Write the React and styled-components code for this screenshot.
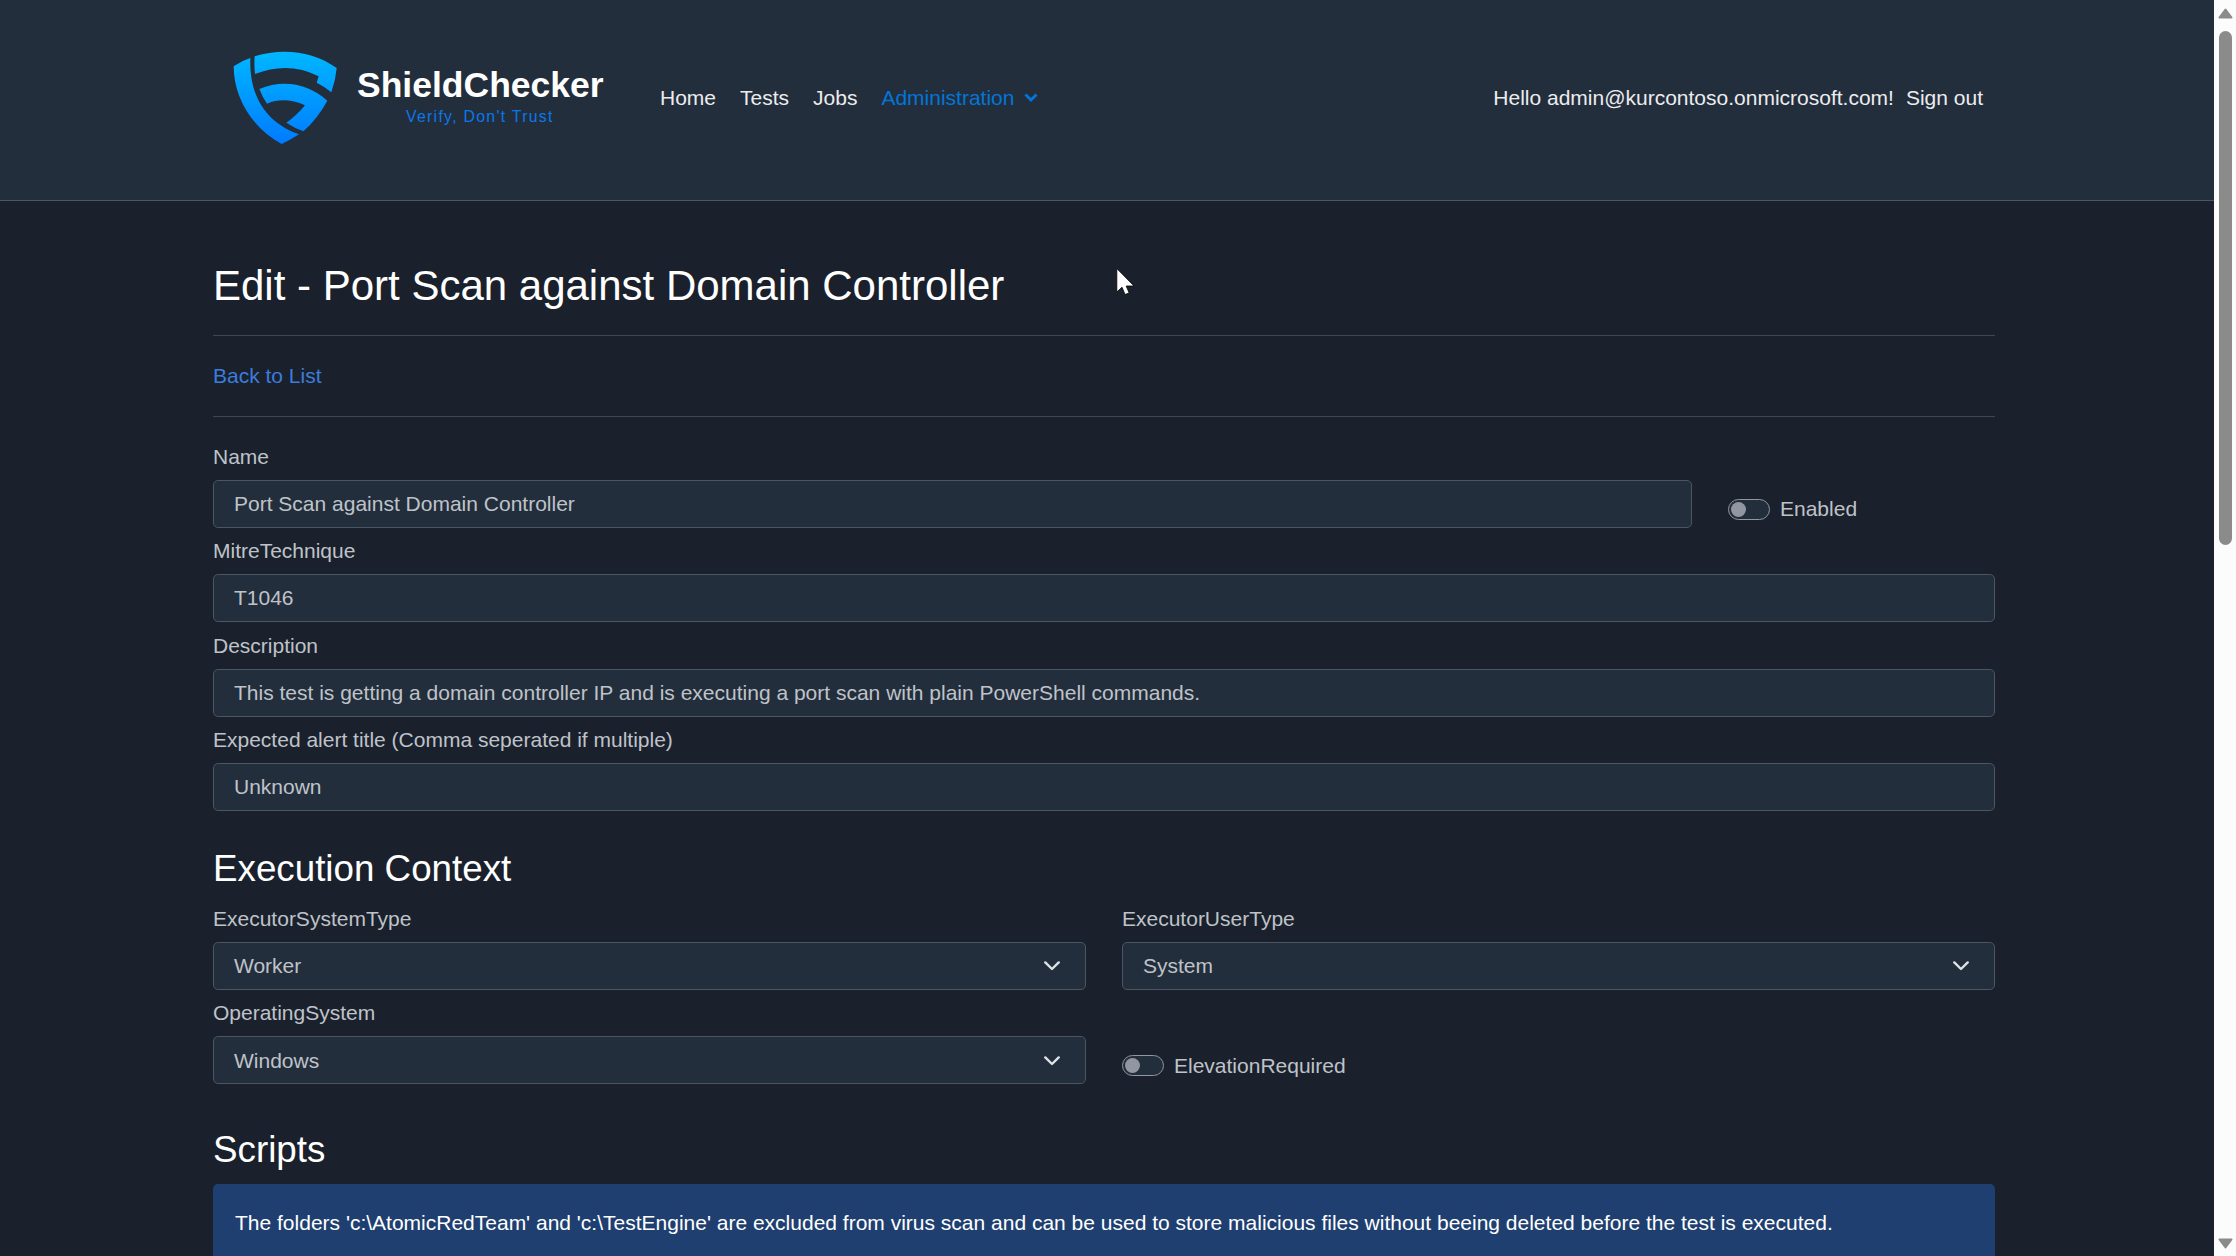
import React from "react";
import styled, { createGlobalStyle } from "styled-components";

const Global = createGlobalStyle`
  html, body { margin: 0; padding: 0; background: #1a212c; overflow: hidden; }
  *, *::before, *::after { box-sizing: border-box; }
  body { font-family: "Liberation Sans", Arial, sans-serif; font-size: 21px; line-height: 31px; color: #bfc3c9; }
`;
const Window = styled.div`display: flex; position: relative; width: 2236px; height: 1256px; overflow: hidden;`;
const Page = styled.div`flex: 1; min-width: 0; height: 1256px; overflow: hidden; background: #1a212c;`;
const Header = styled.header`display: flex; align-items: flex-start; height: 201px; padding: 50px 231px 0 233px; background: #232e3c; border-bottom: 1px solid #4a5662;`;
const Brand = styled.a`display: flex; width: 427px;`;
const ShieldMark = styled.svg`flex: none;`;
const BrandText = styled.div`display: flex; flex-direction: column; padding: 17px 0 0 20px; width: 271px;`;
const BrandName = styled.span`font-size: 35.5px; line-height: 36px; font-weight: 700; color: #fff; white-space: nowrap;`;
const Tagline = styled.span`font-size: 15.8px; line-height: 20px; letter-spacing: 1.3px; color: #0a78ea; margin: 4px 0 0 49px; white-space: nowrap;`;
const Nav = styled.nav`display: flex; gap: 24px; padding-top: 32px;`;
const NavLink = styled.a`display: flex; align-items: center; gap: 10px; line-height: 31px; white-space: nowrap; color: ${(p) => (p.$active ? "#0275d8" : "#ececee")};`;
const Account = styled.div`display: flex; gap: 12px; margin-left: auto; padding-top: 32px; color: #ececee; white-space: nowrap;`;
const Main = styled.main`width: 1782px; margin-left: 213px;`;
const Title = styled.h1`margin: 0; padding-top: 60px; height: 134px; font-size: 42px; line-height: 50px; font-weight: 400; color: #fff; white-space: nowrap;`;
const Rule = styled.hr`margin: 0; border: 0; height: 1px; background: #404751;`;
const BackRow = styled.div`height: 80px; padding-top: 24px; color: #3b7ddd;`;
const Form = styled.form`display: flex; flex-direction: column; padding-top: 25px; gap: 8.4px;`;
const Columns = styled.div`display: grid; grid-template-columns: ${(p) => p.$cols}; column-gap: 36px; align-items: start; margin-top: ${(p) => p.$top || 0}px;`;
const Field = styled.div`display: flex; flex-direction: column; gap: 7px; height: 86px;`;
const Label = styled.label`height: 31px; line-height: 29px; white-space: nowrap;`;
const Control = styled.div`display: flex; align-items: center; justify-content: space-between; height: 48px; padding: 0 25px 1px 20px; background: #232e3c; border: 1px solid #4a5662; border-radius: 5px; white-space: nowrap;`;
const SelectControl = styled(Control)`padding-bottom: 0;`;
const SwitchRow = styled.div`display: flex; align-items: center; gap: 10px; padding-top: 49px; height: 86px;`;
const SwitchLabel = styled.span`padding-bottom: 1.1px;`;
const Track = styled.span`display: flex; align-items: center; width: 42px; height: 21px; padding-left: 2px; border: 1px solid #9196a0; border-radius: 11px; background: #232e3c;`;
const Knob = styled.span`width: 15px; height: 15px; border-radius: 50%; background: #9196a0;`;
const Heading = styled.h2`margin: 0; font-size: 36.75px; line-height: 44px; font-weight: 400; color: #fff; padding-top: ${(p) => p.$top}px; height: ${(p) => p.$h}px;`;
const Alert = styled.div`height: 90px; padding: 23px 22px; background: #1f3f70; border-radius: 5px; color: #fff; white-space: nowrap;`;
const Scrollbar = styled.div`display: flex; flex-direction: column; align-items: center; width: 22px; height: 1256px; padding: 8px 0 7px 1px; background: #fcfcfc;`;
const Thumb = styled.div`width: 13px; height: 514px; margin-top: 12px; margin-bottom: auto; border-radius: 7px; background: #8b8b8b;`;
const ArrowIcon = styled.svg`flex: none;`;
const Pointer = styled.svg`position: absolute; left: 1116px; top: 268px;`;

const Shield = () => (
  <ShieldMark width="104" height="95" viewBox="100 60 312 285">
    <defs>
      <linearGradient id="shield" gradientUnits="userSpaceOnUse" x1="256" y1="65" x2="256" y2="342">
        <stop offset="0" stopColor="#00b7ff" />
        <stop offset="1" stopColor="#007bff" />
      </linearGradient>
    </defs>
    <g fill="url(#shield)">
      <path d="M102 109Q126 92 152 84C149 166 174 268 298 313Q272 330 246 342C162 296 102 208 102 109Z" />
      <path d="M165 79C250 53 340 64 411 114Q408 151 395 187Q374 169 351 158L357 139C297 108 232 106 166 132Q163 105 165 79Z" />
      <path d="M179 177C250 147 325 160 383 212Q354 266 311 304Q284 294 260 278Q293 255 316 226C276 208 238 206 202 221Q188 201 179 177Z" />
    </g>
  </ShieldMark>
);
const Chevron = () => (
  <svg width="16" height="11" viewBox="0 0 16 11" fill="none" stroke="#dee2e6" strokeWidth="2.4" strokeLinecap="round" strokeLinejoin="round">
    <path d="M1.3 2.4L8 9L14.7 2.4" />
  </svg>
);
const TextField = ({ label, value }) => (
  <Field><Label>{label}</Label><Control>{value}</Control></Field>
);
const SelectField = ({ label, value }) => (
  <Field><Label>{label}</Label><SelectControl>{value}<Chevron /></SelectControl></Field>
);
const Switch = ({ label }) => (
  <SwitchRow><Track><Knob /></Track><SwitchLabel>{label}</SwitchLabel></SwitchRow>
);
const Arrow = ({ down }) => (
  <ArrowIcon width="15" height="11" viewBox="0 0 15 11">
    <path d={down ? "M1.5 1.5H13.5L7.5 9.5Z" : "M1.5 9.5H13.5L7.5 1.5Z"} fill="#8b8b8b" stroke="#8b8b8b" strokeWidth="2" strokeLinejoin="round" />
  </ArrowIcon>
);

export default function App() {
  return (
    <Window>
      <Global />
      <Page>
        <Header>
          <Brand>
            <Shield />
            <BrandText>
              <BrandName>ShieldChecker</BrandName>
              <Tagline>Verify, Don't Trust</Tagline>
            </BrandText>
          </Brand>
          <Nav>
            <NavLink>Home</NavLink>
            <NavLink>Tests</NavLink>
            <NavLink>Jobs</NavLink>
            <NavLink $active>
              Administration
              <svg width="14" height="10" viewBox="0 0 14 10" fill="none" stroke="#0275d8" strokeWidth="3"><path d="M1.5 1.5L7 7L12.5 1.5" /></svg>
            </NavLink>
          </Nav>
          <Account>
            <span>Hello admin@kurcontoso.onmicrosoft.com!</span>
            <span>Sign out</span>
          </Account>
        </Header>
        <Main>
          <Title>Edit - Port Scan against Domain Controller</Title>
          <Rule />
          <BackRow>Back to List</BackRow>
          <Rule />
          <Form>
            <Columns $cols="1479px 1fr">
              <TextField label="Name" value="Port Scan against Domain Controller" />
              <Switch label="Enabled" />
            </Columns>
            <TextField label="MitreTechnique" value="T1046" />
            <TextField label="Description" value="This test is getting a domain controller IP and is executing a port scan with plain PowerShell commands." />
            <TextField label="Expected alert title (Comma seperated if multiple)" value="Unknown" />
          </Form>
          <Heading $top={36} $h={92.6}>Execution Context</Heading>
          <Columns $cols="1fr 1fr">
            <SelectField label="ExecutorSystemType" value="Worker" />
            <SelectField label="ExecutorUserType" value="System" />
          </Columns>
          <Columns $cols="1fr 1fr" $top={8.4}>
            <SelectField label="OperatingSystem" value="Windows" />
            <Switch label="ElevationRequired" />
          </Columns>
          <Heading $top={44} $h={99.8}>Scripts</Heading>
          <Alert>The folders 'c:\AtomicRedTeam' and 'c:\TestEngine' are excluded from virus scan and can be used to store malicious files without beeing deleted before the test is executed.</Alert>
        </Main>
      </Page>
      <Scrollbar>
        <Arrow />
        <Thumb />
        <Arrow down />
      </Scrollbar>
      <Pointer width="20" height="30" viewBox="0 0 20 30">
        <path d="M0.8 0.5V24L6 19.2L9 26.5L13.2 25L10.2 18H18Z" fill="#fff" stroke="#000" strokeWidth="0.8" />
      </Pointer>
    </Window>
  );
}
